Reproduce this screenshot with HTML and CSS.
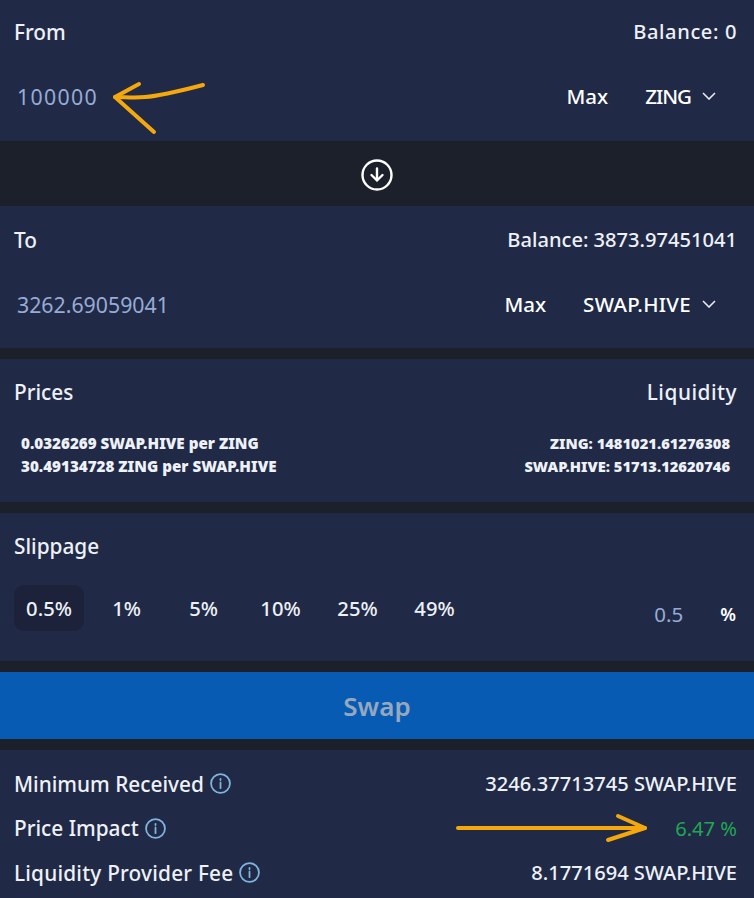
FILE: index.html
```html
<!DOCTYPE html>
<html lang="en">
<head>
<meta charset="utf-8">
<title>Swap</title>
<link rel="stylesheet" href="styles.css">
</head>
<body>
<main class="page">
  <section class="card card-token card-from">
    <div class="row"><span class="label">From</span><span class="label value balance-zero">Balance: 0</span></div>
    <div class="row row-input">
      <span class="amount amount-zeros">100000</span>
      <div class="token"><span class="max">Max</span><span class="symbol symbol-zing">ZING</span>
        <svg class="chev" viewBox="0 0 14 8"><path d="M1 1l6 6 6-6"/></svg></div>
    </div>
  </section>
  <div class="switch">
    <svg class="switch-icon" viewBox="0 0 32 32"><circle cx="16" cy="16" r="14.500"/><path d="M16 9.500v12M10.500 16L16 21.500 21.500 16"/></svg>
  </div>
  <section class="card card-token card-to">
    <div class="row"><span class="label">To</span><span class="label value">Balance: 3873.97451041</span></div>
    <div class="row row-input">
      <span class="amount">3262.69059041</span>
      <div class="token"><span class="max">Max</span><span class="symbol symbol-swap">SWAP.HIVE</span>
        <svg class="chev" viewBox="0 0 14 8"><path d="M1 1l6 6 6-6"/></svg></div>
    </div>
  </section>
  <section class="card card-prices">
    <div class="row"><span class="label">Prices</span><span class="label liquidity">Liquidity</span></div>
    <div class="row row-prices">
      <div class="small"><div>0.0326269 SWAP.HIVE per ZING</div><div>30.49134728 ZING per SWAP.HIVE</div></div>
      <div class="small small-right"><div>ZING: 1481021.61276308</div><div>SWAP.HIVE: 51713.12620746</div></div>
    </div>
  </section>
  <section class="card card-slippage">
    <div class="row"><span class="label">Slippage</span></div>
    <div class="row row-slip">
      <div class="options">
        <span class="opt opt-active">0.5%</span><span class="opt">1%</span><span class="opt">5%</span><span class="opt">10%</span><span class="opt">25%</span><span class="opt">49%</span>
      </div>
      <div class="custom"><span class="custom-val">0.5</span><span class="custom-pct">%</span></div>
    </div>
  </section>
  <button class="swap" type="button">Swap</button>
  <section class="card card-info">
    <div class="row"><span class="label">Minimum Received<svg class="info" viewBox="0 0 20 20"><circle cx="10" cy="10" r="9"/><path d="M10 9v5.500M10 5.500v1.200"/></svg></span><span class="label value">3246.37713745 SWAP.HIVE</span></div>
    <div class="row"><span class="label">Price Impact<svg class="info" viewBox="0 0 20 20"><circle cx="10" cy="10" r="9"/><path d="M10 9v5.500M10 5.500v1.200"/></svg></span><span class="label value impact">6.47 %</span></div>
    <div class="row"><span class="label label-fee">Liquidity Provider Fee<svg class="info" viewBox="0 0 20 20"><circle cx="10" cy="10" r="9"/><path d="M10 9v5.500M10 5.500v1.200"/></svg></span><span class="label value">8.1771694 SWAP.HIVE</span></div>
  </section>
  <svg class="annot" viewBox="0 0 754 898" aria-hidden="true">
    <path d="M203 85C180 91 160 96 145 97C135 98 125 97 115 97"/>
    <path d="M139 84L115 97L154 132"/>
    <path d="M458 828H645"/>
    <path d="M618 816L645 828L608 840"/>
  </svg>
</main>
</body>
</html>
```
FILE: styles.css
```css
* { box-sizing: border-box; }
html, body { margin: 0; padding: 0; }
body {
  background: #1b202b;
  font-family: "Noto Sans", "Liberation Sans", sans-serif;
  color: #eef1f7;
}
.page {
  position: relative;
  width: 754px;
  height: 898px;
  overflow: hidden;
  display: flex;
  flex-direction: column;
}
.card { background: #202a47; padding: 0 17px 0 14px; }
.row { display: flex; justify-content: space-between; align-items: center; }
.label { font-size: 20.800px; font-weight: 500; line-height: 26px; display: inline-flex; align-items: center; white-space: nowrap; }
.label-fee { letter-spacing: 0.200px; }
.value { font-size: 20.100px; padding-top: 1px; }
.balance-zero { letter-spacing: 0.600px; }
.liquidity { letter-spacing: 0.500px; }
.card-from { height: 141px; padding-top: 18px; }
.card-to { height: 142px; padding-top: 20px; }
.row-input { margin-top: 31px; height: 40px; padding-left: 3px; }
.amount { font-size: 21.300px; color: #98abd6; line-height: 28px; padding-top: 2px; }
.amount-zeros { letter-spacing: 1.300px; }
.token { display: flex; align-items: center; font-size: 20.500px; font-weight: 500; color: #fff; padding-right: 21px; }
.max { margin-right: 37px; }
.symbol-zing { letter-spacing: -1px; }
.symbol-swap { letter-spacing: 0.300px; }
.chev { width: 14px; height: 8px; margin-left: 11px; fill: none; stroke: #e6eaf3; stroke-width: 1.600; }
.switch { height: 65px; display: flex; align-items: center; justify-content: center; padding-top: 3px; }
.switch-icon { width: 32px; height: 32px; fill: none; stroke: #fff; stroke-width: 2.400; stroke-linecap: round; stroke-linejoin: round; }
.card-prices { height: 143px; margin-top: 11px; padding-top: 20px; }
.row-prices { margin-top: 27px; padding: 0 7px; align-items: flex-start; }
.small { font-size: 15.200px; font-weight: 900; line-height: 23px; color: #eef1f7; }
.small-right { text-align: right; font-size: 14.700px; }
.card-slippage { height: 148px; margin-top: 11px; padding-top: 20px; }
.row-slip { margin-top: 26px; align-items: center; }
.options { display: flex; }
.opt { width: 77px; height: 46px; display: flex; align-items: center; justify-content: center; font-size: 20.200px; font-weight: 500; }
.opt-active { width: 70px; margin-right: 4px; background: #1b2239; border-radius: 10px; }
.custom { display: flex; align-items: center; padding: 12px 1px 0 0; }
.custom-val { font-size: 20.500px; color: #98abd6; margin-right: 37px; }
.custom-pct { font-size: 18px; font-weight: 600; color: #fff; }
.swap {
  display: block;
  width: 100%;
  height: 67px;
  margin-top: 11px;
  border: 0;
  background: #075bb3;
  color: #96a8bf;
  font-family: inherit;
  font-size: 26px;
  font-weight: 600;
}
.card-info { height: 148px; margin-top: 11px; padding-top: 20px; display: flex; flex-direction: column; gap: 17.500px; }
.info { width: 21px; height: 21px; margin-left: 6px; fill: none; stroke: #7fb4dd; stroke-width: 1.700; stroke-linecap: round; }
.impact { color: #22a652; font-weight: 400; }
.annot { position: absolute; inset: 0; width: 754px; height: 898px; fill: none; stroke: #f5a80c; stroke-width: 4; stroke-linecap: round; stroke-linejoin: round; pointer-events: none; }
```
